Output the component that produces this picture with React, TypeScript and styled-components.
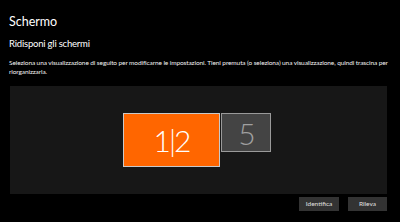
import styled, { createGlobalStyle } from "styled-components";

const GlobalStyle = createGlobalStyle`
  html, body {
    margin: 0;
    padding: 0;
    background: #000;
  }
  body {
    font-family: Lato, "Noto Sans", sans-serif;
    color: #fff;
  }
`;

const Page = styled.div`
  width: 400px;
  height: 222px;
  box-sizing: border-box;
  padding: 14px 12px 0 9px;
  background: #000;
  overflow: hidden;
`;

const Title = styled.h1`
  margin: 0;
  font-size: 12.5px;
  font-weight: 400;
  line-height: 16px;
  color: #fff;
`;

const Subtitle = styled.h2`
  margin: 8px 0 0;
  font-size: 9.5px;
  font-weight: 400;
  line-height: 12px;
  letter-spacing: -0.2px;
  color: #fff;
`;

const Description = styled.p`
  margin: 8px 0 0;
  font-size: 6.5px;
  line-height: 9px;
  letter-spacing: -0.1px;
  color: #f2f2f2;
`;

const Canvas = styled.div`
  position: relative;
  margin: 10px 1px 0 1px;
  height: 108px;
  background: #171717;
`;

const Monitor = styled.div<{ $active?: boolean }>`
  position: absolute;
  box-sizing: border-box;
  display: flex;
  align-items: center;
  justify-content: center;
  border: 1px solid ${(p) => (p.$active ? "#c9c9c9" : "#9a9a9a")};
  background: ${(p) => (p.$active ? "#ff6600" : "#444444")};
  color: ${(p) => (p.$active ? "#ffffff" : "#a0a0a0")};
  font-family: Lato, sans-serif;
  font-weight: 300;
  font-size: 30px;
  letter-spacing: -2px;
`;

const Actions = styled.div`
  display: flex;
  justify-content: flex-end;
  gap: 9px;
  margin-top: 3px;
  padding-right: 1px;
`;

const Button = styled.button<{ $w: number }>`
  width: ${(p) => p.$w}px;
  height: 14px;
  padding: 0;
  border: none;
  background: #333333;
  color: #e0e0e0;
  font-family: Lato, sans-serif;
  font-size: 6.5px;
  line-height: 14px;
`;

const monitors = [
  { id: "1|2", left: 113, top: 27, width: 97, height: 54, active: true },
  { id: "5", left: 211, top: 27, width: 50, height: 39, active: false },
];

export default function App() {
  return (
    <Page>
      <GlobalStyle />
      <Title>Schermo</Title>
      <Subtitle>Ridisponi gli schermi</Subtitle>
      <Description>
        Seleziona una visualizzazione di seguito per modificarne le impostazioni. Tieni premuta (o
        seleziona) una visualizzazione, quindi trascina per riorganizzarla.
      </Description>
      <Canvas>
        {monitors.map((m) => (
          <Monitor
            key={m.id}
            $active={m.active}
            style={{ left: m.left, top: m.top, width: m.width, height: m.height }}
          >
            {m.id}
          </Monitor>
        ))}
      </Canvas>
      <Actions>
        <Button $w={40}>Identifica</Button>
        <Button $w={39}>Rileva</Button>
      </Actions>
    </Page>
  );
}
